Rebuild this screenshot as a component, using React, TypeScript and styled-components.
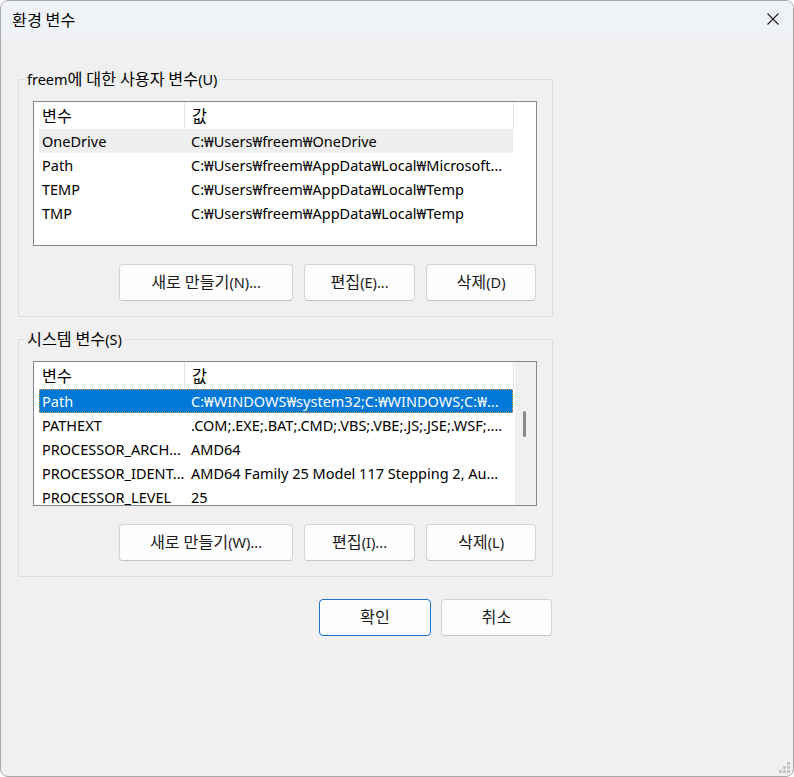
import React from "react";
import styled, { createGlobalStyle } from "styled-components";

const FONT = `"Segoe UI", "Noto Sans", "Noto Sans CJK KR", sans-serif`;

const GlobalStyle = createGlobalStyle`
  html, body { margin: 0; padding: 0; background: #ffffff; }
  body { font-family: ${FONT}; font-size: 14.5px; color: #000; }
  * { box-sizing: border-box; }
`;

const Ko = styled.span`
  font-family: "Noto Sans CJK KR", sans-serif;
  font-size: 16.2px;
  line-height: 16px;
`;

const HANGUL = /([\u1100-\u11FF\u3130-\u318F\uAC00-\uD7AF]+)/;

function T({ children }: { children: string }) {
  const parts = children.split(HANGUL);
  return <>{parts.map((p, i) => (i % 2 === 1 ? <Ko key={i}>{p}</Ko> : p))}</>;
}

const Window = styled.div`
  position: relative;
  width: 794px;
  height: 777px;
  border: 1px solid #a8a8a8;
  border-radius: 8px;
  background: #f0f0f0;
  overflow: hidden;
  display: flex;
  flex-direction: column;
`;

const TitleBar = styled.div`
  height: 36px;
  flex: none;
  background: #eff3f8;
  display: flex;
  align-items: center;
  justify-content: space-between;
  padding-left: 11px;
`;

const Title = styled.div`
  height: 20px;
  line-height: 20px;
  margin-top: 1px;
  white-space: nowrap;
`;

const CloseButton = styled.div`
  width: 40px;
  height: 36px;
  display: flex;
  align-items: center;
  justify-content: center;
`;

const Body = styled.div`
  padding: 32px 0 0 17px;
  display: flex;
  flex-direction: column;
  gap: 12px;
`;

const Group = styled.fieldset`
  margin: 0;
  padding: 0;
  width: 535px;
  min-width: 0;
  border: 1px solid #dcdcdc;
`;

const Legend = styled.legend`
  margin-left: 6px;
  padding: 0 2px;
  height: 20px;
  line-height: 20px;
  white-space: nowrap;
`;

const GroupInner = styled.div`
  padding: 12px 16px 15px 14px;
  display: flex;
  flex-direction: column;
  gap: 18px;
`;

const ListBox = styled.div`
  width: 504px;
  height: 145px;
  border: 1px solid #828790;
  background: #fff;
  display: flex;
  overflow: hidden;
`;

const ListMain = styled.div`
  width: 480px;
  flex: none;
  display: flex;
  flex-direction: column;
`;

const HeaderRow = styled.div`
  display: flex;
  height: 27px;
  flex: none;
`;

const HeaderCell = styled.div<{ $w: number; $pad: number }>`
  width: ${(p) => p.$w}px;
  height: 27px;
  padding: 4px 0 0 ${(p) => p.$pad}px;
  border-right: 1px solid #e5e5e5;
  line-height: 20px;
  white-space: nowrap;
`;

const Row = styled.div<{ $state?: "selected" | "hover" }>`
  display: flex;
  height: 24px;
  flex: none;
  margin-left: 5px;
  width: 474px;
  align-items: center;
  background: ${(p) =>
    p.$state === "selected" ? "#0078d7" : p.$state === "hover" ? "#efefef" : "transparent"};
  color: ${(p) => (p.$state === "selected" ? "#fff" : "#000")};
  outline: ${(p) => (p.$state === "selected" ? "1px dotted #e9a34a" : "none")};
  outline-offset: -1px;
`;

const Cell = styled.div<{ $w?: number; $pad: number }>`
  ${(p) => (p.$w ? `width: ${p.$w}px; flex: none;` : "flex: 1;")}
  padding-left: ${(p) => p.$pad}px;
  white-space: nowrap;
  overflow: hidden;
  line-height: 20px;
`;

const ScrollTrack = styled.div`
  flex: 1;
  margin-left: 1px;
  background: #f0f0f0;
  position: relative;
`;

const ScrollThumb = styled.div`
  position: absolute;
  left: 8px;
  top: 49px;
  width: 3px;
  height: 26px;
  border-radius: 2px;
  background: #8a8a8a;
`;

const ButtonRow = styled.div`
  display: flex;
  justify-content: flex-end;
  gap: 11px;
`;

const Button = styled.div<{ $w: number; $primary?: boolean }>`
  width: ${(p) => p.$w}px;
  height: 37px;
  padding-top: 7px;
  text-align: center;
  background: #fdfdfd;
  border: 1px solid ${(p) => (p.$primary ? "#1a72c9" : "#d3d3d3")};
  border-bottom-color: ${(p) => (p.$primary ? "#1a72c9" : "#c4c4c4")};
  border-radius: 4px;
  color: #1b1b1b;
  white-space: nowrap;
  line-height: 20px;
`;

const Footer = styled.div`
  width: 534px;
  display: flex;
  justify-content: flex-end;
  gap: 10px;
  margin-top: 10px;
`;

const Grip = styled.svg`
  position: absolute;
  right: 2px;
  bottom: 2px;
`;

type Item = { name: string; value: string; state?: "selected" | "hover" };

const userVars: Item[] = [
  { name: "OneDrive", value: "C:₩Users₩freem₩OneDrive", state: "hover" },
  { name: "Path", value: "C:₩Users₩freem₩AppData₩Local₩Microsoft..." },
  { name: "TEMP", value: "C:₩Users₩freem₩AppData₩Local₩Temp" },
  { name: "TMP", value: "C:₩Users₩freem₩AppData₩Local₩Temp" },
];

const sysVars: Item[] = [
  { name: "Path", value: "C:₩WINDOWS₩system32;C:₩WINDOWS;C:₩...", state: "selected" },
  { name: "PATHEXT", value: ".COM;.EXE;.BAT;.CMD;.VBS;.VBE;.JS;.JSE;.WSF;...." },
  { name: "PROCESSOR_ARCH...", value: "AMD64" },
  { name: "PROCESSOR_IDENT...", value: "AMD64 Family 25 Model 117 Stepping 2, Au..." },
  { name: "PROCESSOR_LEVEL", value: "25" },
];

function VarList({ items, scroll }: { items: Item[]; scroll?: boolean }) {
  return (
    <ListBox>
      <ListMain>
        <HeaderRow>
          <HeaderCell $w={151} $pad={8}><T>변수</T></HeaderCell>
          <HeaderCell $w={329} $pad={7}><T>값</T></HeaderCell>
        </HeaderRow>
        {items.map((it) => (
          <Row key={it.name} $state={it.state}>
            <Cell $w={145} $pad={3}>{it.name}</Cell>
            <Cell $pad={7}>{it.value}</Cell>
          </Row>
        ))}
      </ListMain>
      {scroll && (
        <ScrollTrack>
          <ScrollThumb />
        </ScrollTrack>
      )}
    </ListBox>
  );
}

function VarGroup({
  title,
  items,
  scroll,
  newLabel,
  editLabel,
  delLabel,
}: {
  title: string;
  items: Item[];
  scroll?: boolean;
  newLabel: string;
  editLabel: string;
  delLabel: string;
}) {
  return (
    <Group>
      <Legend><T>{title}</T></Legend>
      <GroupInner>
        <VarList items={items} scroll={scroll} />
        <ButtonRow>
          <Button $w={174}><T>{newLabel}</T></Button>
          <Button $w={111}><T>{editLabel}</T></Button>
          <Button $w={110}><T>{delLabel}</T></Button>
        </ButtonRow>
      </GroupInner>
    </Group>
  );
}

export default function App() {
  return (
    <>
      <GlobalStyle />
      <Window>
        <TitleBar>
          <Title><T>환경 변수</T></Title>
          <CloseButton>
            <svg width="12" height="12" viewBox="0 0 12 12">
              <path d="M0.5 0.5 L11.5 11.5 M11.5 0.5 L0.5 11.5" stroke="#1a1a1a" strokeWidth="1.1" fill="none" />
            </svg>
          </CloseButton>
        </TitleBar>
        <Body>
          <VarGroup
            title="freem에 대한 사용자 변수(U)"
            items={userVars}
            newLabel="새로 만들기(N)..."
            editLabel="편집(E)..."
            delLabel="삭제(D)"
          />
          <VarGroup
            title="시스템 변수(S)"
            items={sysVars}
            scroll
            newLabel="새로 만들기(W)..."
            editLabel="편집(I)..."
            delLabel="삭제(L)"
          />
          <Footer>
            <Button $w={112} $primary><T>확인</T></Button>
            <Button $w={111}><T>취소</T></Button>
          </Footer>
        </Body>
        <Grip width="12" height="12" viewBox="0 0 12 12">
          <rect x="8" y="0" width="3" height="3" fill="#c4c4c4" />
          <rect x="4" y="4" width="3" height="3" fill="#c4c4c4" />
          <rect x="8" y="4" width="3" height="3" fill="#c4c4c4" />
          <rect x="0" y="8" width="3" height="3" fill="#c4c4c4" />
          <rect x="4" y="8" width="3" height="3" fill="#c4c4c4" />
          <rect x="8" y="8" width="3" height="3" fill="#c4c4c4" />
        </Grip>
      </Window>
    </>
  );
}
